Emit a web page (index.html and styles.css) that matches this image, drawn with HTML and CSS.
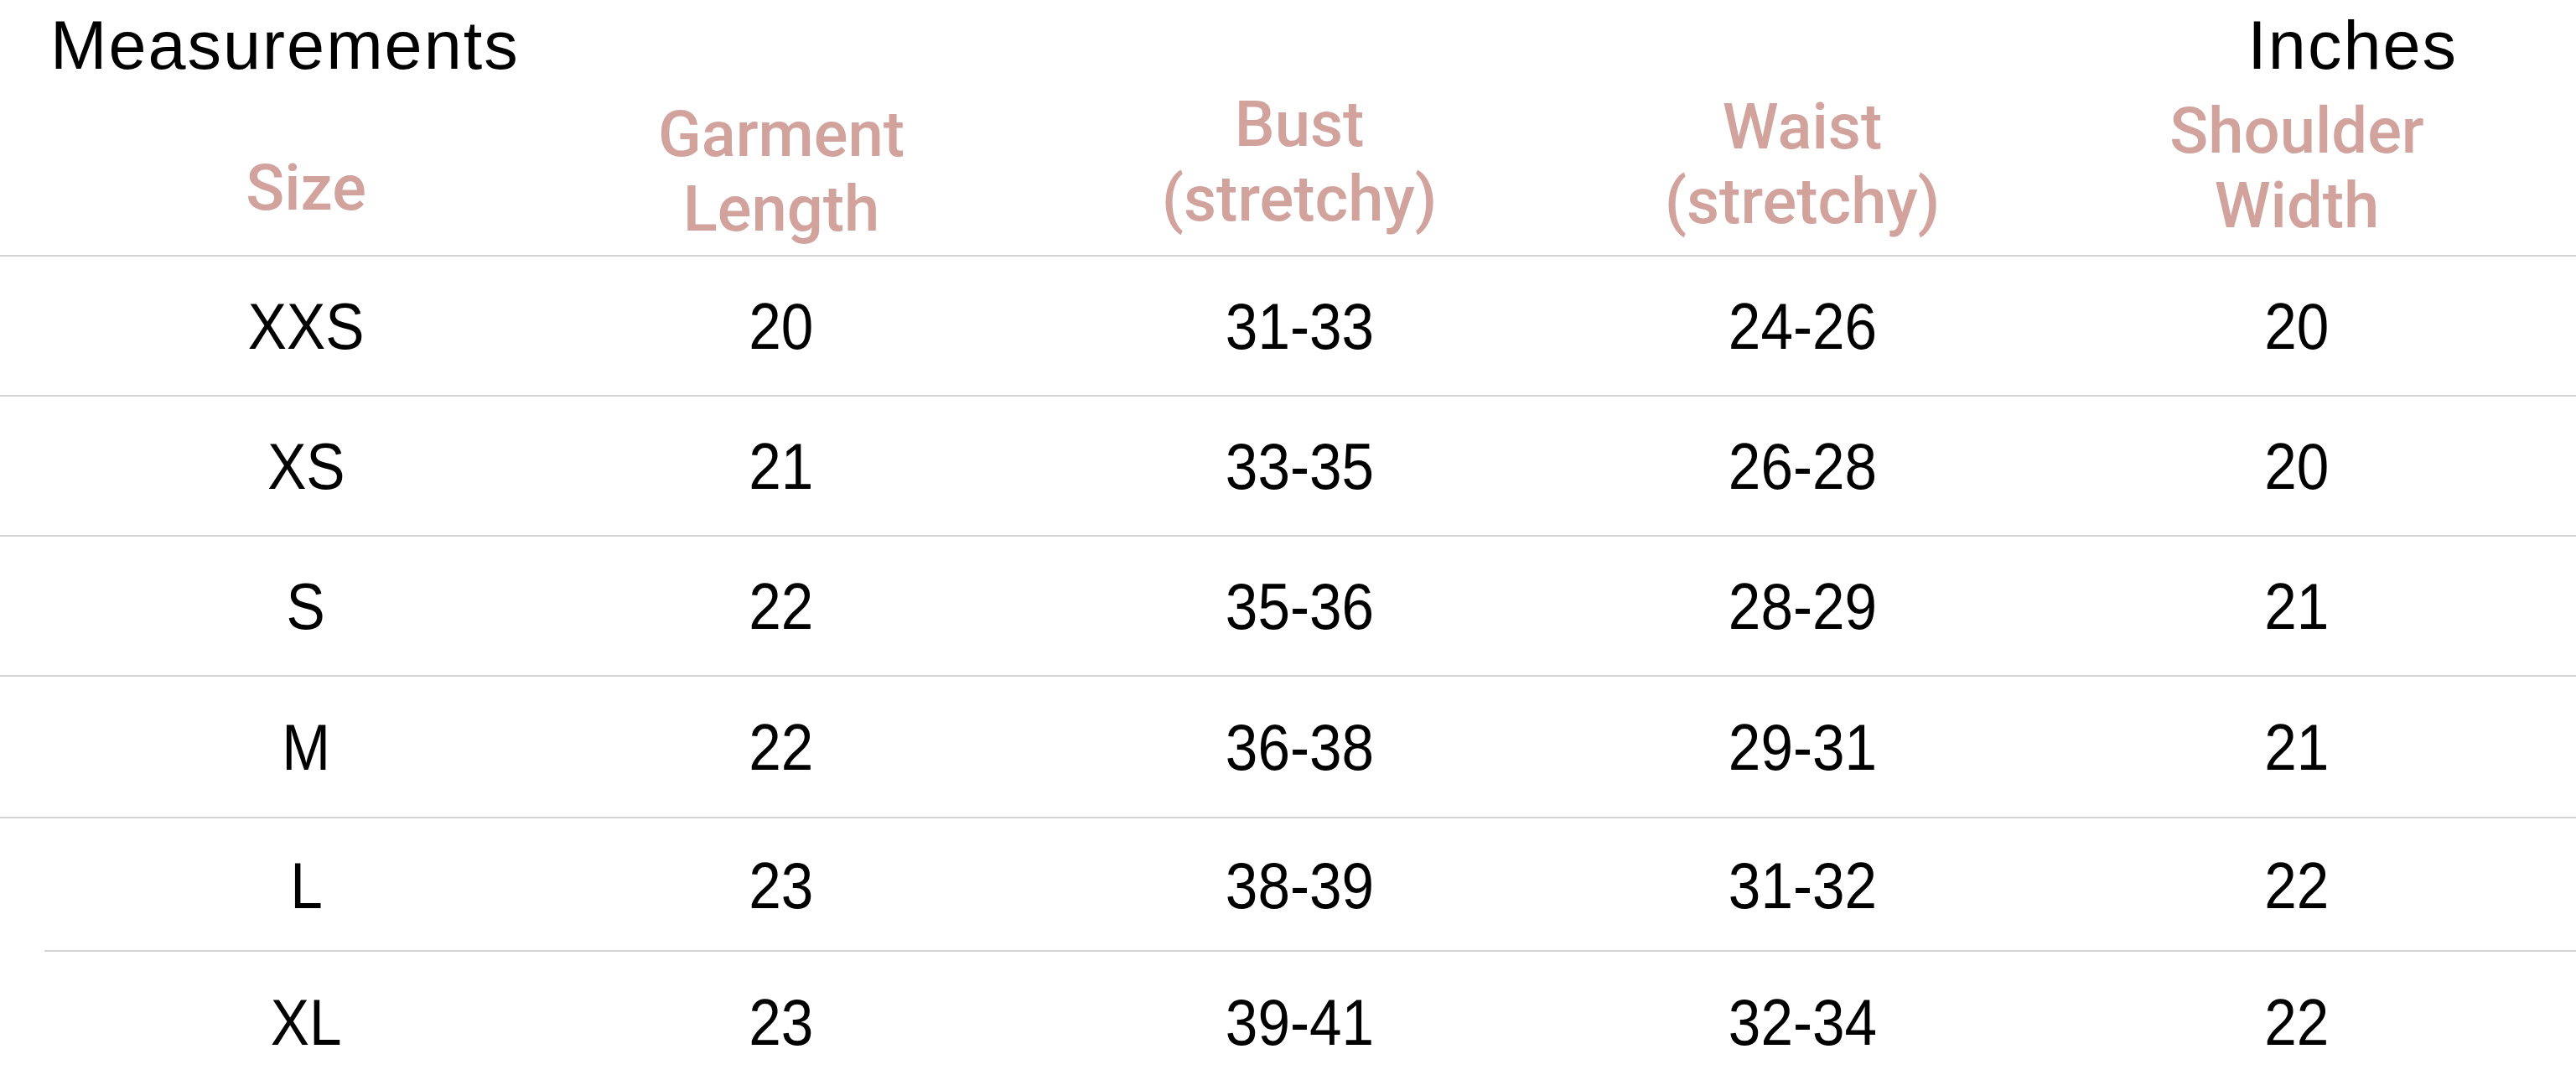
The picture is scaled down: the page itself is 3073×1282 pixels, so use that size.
FILE: index.html
```html
<!DOCTYPE html>
<html lang="en">
<head>
<meta charset="utf-8">
<title>Measurements</title>
<link rel="stylesheet" href="styles.css">
</head>
<body>
<div class="chart">
  <div class="title-row">
    <span class="title">Measurements</span>
    <span class="unit">Inches</span>
  </div>
  <div class="row head">
    <div class="cell hc h-size">Size</div>
    <div class="cell hc h-garment">Garment<br>Length</div>
    <div class="cell hc h-bust">Bust<br>(stretchy)</div>
    <div class="cell hc h-waist">Waist<br>(stretchy)</div>
    <div class="cell hc h-shoulder last">Shoulder<br>Width</div>
  </div>
  <div class="row data">
    <div class="cell"><span class="v">XXS</span></div>
    <div class="cell"><span class="v">20</span></div>
    <div class="cell"><span class="v">31-33</span></div>
    <div class="cell"><span class="v">24-26</span></div>
    <div class="cell last"><span class="v">20</span></div>
  </div>
  <div class="row data">
    <div class="cell"><span class="v">XS</span></div>
    <div class="cell"><span class="v">21</span></div>
    <div class="cell"><span class="v">33-35</span></div>
    <div class="cell"><span class="v">26-28</span></div>
    <div class="cell last"><span class="v">20</span></div>
  </div>
  <div class="row data">
    <div class="cell"><span class="v">S</span></div>
    <div class="cell"><span class="v">22</span></div>
    <div class="cell"><span class="v">35-36</span></div>
    <div class="cell"><span class="v">28-29</span></div>
    <div class="cell last"><span class="v">21</span></div>
  </div>
  <div class="row data tall">
    <div class="cell"><span class="v">M</span></div>
    <div class="cell"><span class="v">22</span></div>
    <div class="cell"><span class="v">36-38</span></div>
    <div class="cell"><span class="v">29-31</span></div>
    <div class="cell last"><span class="v">21</span></div>
  </div>
  <div class="row data short inset">
    <div class="cell"><span class="v">L</span></div>
    <div class="cell"><span class="v">23</span></div>
    <div class="cell"><span class="v">38-39</span></div>
    <div class="cell"><span class="v">31-32</span></div>
    <div class="cell last"><span class="v">22</span></div>
  </div>
  <div class="row data noline">
    <div class="cell"><span class="v">XL</span></div>
    <div class="cell"><span class="v">23</span></div>
    <div class="cell"><span class="v">39-41</span></div>
    <div class="cell"><span class="v">32-34</span></div>
    <div class="cell last"><span class="v">22</span></div>
  </div>
</div>
</body>
</html>
```

FILE: styles.css
```css
html, body {
  margin: 0;
  padding: 0;
  background: #ffffff;
  overflow: hidden;
}

.chart {
  width: 3073px;
  font-family: "Liberation Sans", Arial, sans-serif;
  color: #000;
}

.title-row {
  display: flex;
  justify-content: space-between;
  padding: 9px 141px 0 60px;
  font-size: 81px;
  line-height: 90px;
  letter-spacing: 2px;
}

.row {
  display: grid;
  grid-template-columns: 730px 404px 832px 368px 739px;
  border-bottom: 2px solid #d4d4d4;
  box-sizing: border-box;
}

.cell {
  text-align: center;
}

.cell.last {
  padding-left: 73px;
}

.head {
  height: 207px;
  align-items: end;
}

.hc {
  font-family: Roboto, "Liberation Sans", sans-serif;
  font-weight: 500;
  font-size: 76px;
  line-height: 89px;
  color: #d2a39d;
}

.h-size { padding-bottom: 35px; }
.h-garment { padding-bottom: 10px; }
.h-bust { padding-bottom: 22px; }
.h-waist { padding-bottom: 19px; }
.h-shoulder { padding-bottom: 14px; }

.data {
  height: 167px;
  align-items: center;
}

.data.tall {
  height: 169px;
}

.data.short {
  height: 159px;
}

.data.inset {
  border-bottom: none;
  background: linear-gradient(#d4d4d4, #d4d4d4) no-repeat 53px 100% / calc(100% - 53px) 2px;
}

.data.noline {
  border-bottom: none;
}

.v {
  display: inline-block;
  font-size: 77px;
  line-height: 86px;
  transform: scaleX(0.9);
}
```
